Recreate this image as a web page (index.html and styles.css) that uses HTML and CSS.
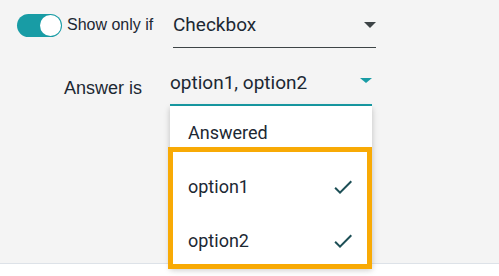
FILE: index.html
```html
<!DOCTYPE html>
<html lang="en">
	<head>
		<meta charset="UTF-8">
		<title>Show only if</title>
		<link rel="stylesheet" href="styles.css">
	</head>
	<body>
		<div class="condition-panel">
			<div class="rule-row">
				<span class="toggle toggle-on">
					<span class="toggle-knob"></span>
				</span>
				<span class="rule-label">Show only if</span>
				<div class="select-field">
					<span class="select-value">Checkbox</span>
					<span class="select-arrow"></span>
				</div>
			</div>
			<div class="answer-row">
				<span class="answer-label">Answer is</span>
				<div class="select-field select-field-open">
					<span class="select-value">option1, option2</span>
					<span class="select-arrow"></span>
					<div class="select-menu">
						<div class="select-option">Answered</div>
						<div class="select-option">
							option1
							<svg class="check-icon" viewBox="0 0 24 24" width="24" height="24"><path d="M9 16.17L4.83 12l-1.42 1.41L9 19 21 7l-1.41-1.41z"/></svg>
						</div>
						<div class="select-option">
							option2
							<svg class="check-icon" viewBox="0 0 24 24" width="24" height="24"><path d="M9 16.17L4.83 12l-1.42 1.41L9 19 21 7l-1.41-1.41z"/></svg>
						</div>
						<div class="highlight-box"></div>
					</div>
				</div>
			</div>
		</div>
	</body>
</html>
```

FILE: styles.css
```css
*, *::before, *::after {
	box-sizing: border-box;
}

html, body {
	margin: 0;
	padding: 0;
	height: 100%;
}

body {
	background: #fff;
	color: #1c2833;
	font-family: "Liberation Sans", Arial, sans-serif;
}

.condition-panel {
	height: 264px;
	background: #f4f4f4;
	border-bottom: 1px solid #dde2e8;
}

.rule-row {
	display: flex;
	align-items: flex-start;
	padding: 13px 0 0 17px;
}

.toggle {
	display: block;
	width: 45px;
	height: 23px;
	margin-top: 1px;
	border-radius: 12px;
	background: #bbb;
	position: relative;
}

.toggle-on {
	background: #189ca5;
}

.toggle-knob {
	position: absolute;
	top: 1px;
	right: 1px;
	width: 21px;
	height: 21px;
	border-radius: 50%;
	background: #fff;
}

.rule-label {
	margin-left: 5px;
	font-size: 16px;
	line-height: 24px;
	width: 106px;
}

.select-field {
	position: relative;
	display: flex;
	align-items: center;
	width: 203px;
	padding-bottom: 10px;
	border-bottom: 1px solid #3d4446;
	font-family: Roboto, sans-serif;
	font-size: 19px;
	line-height: 24px;
}

.select-value {
	flex-grow: 1;
}

.select-arrow {
	width: 0;
	height: 0;
	border-left: 6px solid transparent;
	border-right: 6px solid transparent;
	border-top: 6px solid #3d4446;
	margin-top: -1px;
}

.answer-row {
	display: flex;
	align-items: flex-start;
	margin-top: 23px;
}

.answer-label {
	width: 142px;
	margin-top: 5px;
	margin-right: 28px;
	text-align: right;
	font-size: 18px;
	line-height: 24px;
}

.select-field-open {
	width: 202px;
	padding-bottom: 9px;
	border-bottom: 2px solid #189ca5;
}

.select-field-open .select-arrow {
	border-top-color: #189ca5;
	border-top-width: 5px;
	margin-top: -6px;
}

.select-menu {
	position: absolute;
	top: 100%;
	left: 0;
	margin-top: 2px;
	width: 202px;
	background: #fff;
	box-shadow: 0 2px 6px rgba(0, 0, 0, 0.22);
	font-size: 18px;
}

.select-option {
	display: flex;
	align-items: center;
	justify-content: space-between;
	height: 54px;
	padding: 0 17px 0 18px;
	line-height: 54px;
}

.check-icon {
	fill: #1d4f56;
}

.highlight-box {
	position: absolute;
	left: -2px;
	top: 41px;
	width: 204px;
	height: 122px;
	border: 5px solid #f8aa05;
}
```
